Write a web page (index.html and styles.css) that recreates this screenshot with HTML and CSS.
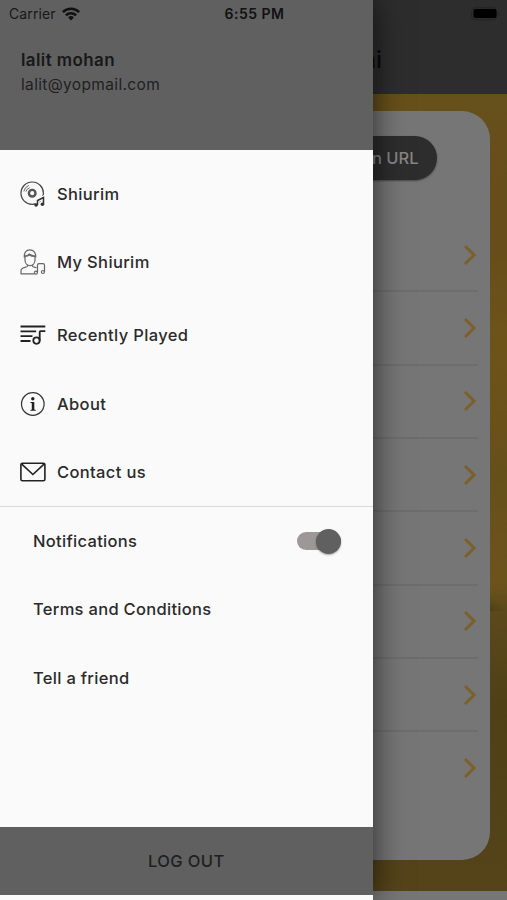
FILE: index.html
```html
<!DOCTYPE html>
<html lang="en">
<head>
<meta charset="utf-8">
<title>Shiurim</title>
<link rel="stylesheet" href="styles.css">
</head>
<body>
<div class="screen">
  <main class="app">
    <header class="app-bar"><h1 class="app-title">ni</h1></header>
    <div class="backdrop">
      <section class="card">
        <button class="pill">n URL</button>
        <ul class="list">
          <li class="row"><svg class="chevron" viewBox="0 0 14 22"><path d="M2 2l9 9-9 9"/></svg></li>
          <li class="row"><svg class="chevron" viewBox="0 0 14 22"><path d="M2 2l9 9-9 9"/></svg></li>
          <li class="row"><svg class="chevron" viewBox="0 0 14 22"><path d="M2 2l9 9-9 9"/></svg></li>
          <li class="row"><svg class="chevron" viewBox="0 0 14 22"><path d="M2 2l9 9-9 9"/></svg></li>
          <li class="row"><svg class="chevron" viewBox="0 0 14 22"><path d="M2 2l9 9-9 9"/></svg></li>
          <li class="row"><svg class="chevron" viewBox="0 0 14 22"><path d="M2 2l9 9-9 9"/></svg></li>
          <li class="row"><svg class="chevron" viewBox="0 0 14 22"><path d="M2 2l9 9-9 9"/></svg></li>
          <li class="row"><svg class="chevron" viewBox="0 0 14 22"><path d="M2 2l9 9-9 9"/></svg></li>
        </ul>
      </section>
    </div>
  </main>

  <aside class="drawer">
    <header class="profile">
      <strong class="name">lalit mohan</strong>
      <span class="email">lalit@yopmail.com</span>
    </header>
    <nav class="menu">
      <a class="item">
        <svg class="icon" viewBox="0 0 26 26"><g fill="none" stroke="#444"><circle cx="12.200" cy="12.200" r="11.200" stroke-width="1.200"/><circle cx="12.200" cy="12.200" r="3.300" stroke="#555" stroke-width="2.400"/><path d="M3.800 10.400a8.600 8.600 0 0 1 5-6M5.800 10.700a6.500 6.500 0 0 1 3.800-4" stroke="#666" stroke-width="1"/></g><path d="M17.500 24v-4.500l6-3V23" fill="none" stroke="#fafafa" stroke-width="4"/><path d="M17.500 24v-4.500l6-3V23" fill="none" stroke="#333" stroke-width="1.500"/><circle cx="16.100" cy="24" r="1.800" fill="#333"/><circle cx="22.400" cy="23.200" r="1.800" fill="#333"/></svg>
        <span>Shiurim</span>
      </a>
      <a class="item">
        <svg class="icon" viewBox="0 0 26 26"><g fill="none" stroke="#666" stroke-width="1.200" stroke-linejoin="round"><path d="M4.300 8.500C4 3.500 6 .8 9.800.8S16 3.500 15.700 8.500M4.300 7c2.500-.2 4-1 4.800-2 1.500 1.200 4 1.900 6.600 2M5 7.500v3.500c0 3.400 2.300 5.600 5 5.600s5-2.200 5-5.600V7.500"/><path d="M5 7.500c2-.1 3.600-.7 4.300-1.400 1.500 1 3.600 1.400 5.700 1.400M7.500 15.800v1.500c0 1.200-6.500.5-6.500 4.500v3h13.500M12.500 15.800v1.500c0 .7 2.500.8 4 1.600"/><path d="M17.500 23.500v-7.300c0-1 .5-1.500 1.500-1.500h4c1 0 1.500.5 1.500 1.500v6.800"/><circle cx="15.900" cy="23.700" r="1.500"/><circle cx="22.900" cy="23" r="1.500"/></g></svg>
        <span>My Shiurim</span>
      </a>
      <a class="item spaced">
        <svg class="icon" viewBox="0 0 26 26"><g fill="none" stroke="#222" stroke-width="1.800"><path d="M.5 4.500h24.800M.5 9.300h15.700M.5 14.200h12M.5 19h10M19.700 18.800V10q0-.9.900-.9h4.700"/><circle cx="16.500" cy="18.600" r="3.200"/></g></svg>
        <span>Recently Played</span>
      </a>
      <a class="item">
        <svg class="icon" viewBox="0 0 26 26"><circle cx="12.800" cy="13" r="11.300" fill="none" stroke="#333" stroke-width="1.200"/><circle cx="12.800" cy="7.800" r="1.700" fill="#222"/><path d="M10.400 10.900h3.900v7.500l1.500.5v.9h-5.400v-.9l1.400-.5v-6.100l-1.400-.5z" fill="#222"/></svg>
        <span>About</span>
      </a>
      <a class="item">
        <svg class="icon" viewBox="0 0 26 26"><g fill="none" stroke="#222" stroke-width="1.600"><rect x=".9" y="4.200" width="24" height="17.600" rx="1.500"/><path d="M1.500 4.800l11.400 10.700L24.300 4.800"/></g></svg>
        <span>Contact us</span>
      </a>
    </nav>
    <div class="options">
      <div class="option"><span>Notifications</span><span class="switch"><span class="knob"></span></span></div>
      <div class="option">Terms and Conditions</div>
      <div class="option">Tell a friend</div>
    </div>
    <button class="logout">LOG OUT</button>
  </aside>

  <div class="status">
    <span class="carrier">Carrier
      <svg class="wifi" viewBox="0 0 18 14"><g fill="none" stroke="#111" stroke-width="2.500"><path d="M.9 5.100a11.500 11.500 0 0 1 16.200 0M3.900 8.300a7.200 7.200 0 0 1 10.200 0"/></g><path d="M9 13.500l-2.900-3a4.100 4.100 0 0 1 5.800 0z" fill="#111"/></svg>
    </span>
    <span class="clock">6:55 PM</span>
    <svg class="battery" viewBox="0 0 29 14"><rect x=".6" y=".8" width="25" height="12" rx="3.500" fill="none" stroke="#242424"/><rect x="2.500" y="2" width="23" height="9" rx="2" fill="#000"/><path d="M27 5v4q1.300-.5 1.300-2T27 5z" fill="#242424"/></svg>
  </div>
</div>
</body>
</html>
```
FILE: styles.css
```css
* { box-sizing: border-box; }

body {
  margin: 0;
  font-family: Inter, "Liberation Sans", sans-serif;
  color: #2b2b2b;
}

button { border: 0; font-family: inherit; }

.screen {
  position: relative;
  width: 507px;
  height: 900px;
  overflow: hidden;
}

/* Dimmed page behind the drawer */
.app {
  display: flex;
  flex-direction: column;
  height: 100%;
  background: #767676;
}

.app-bar {
  height: 94px;
  padding: 45px 125px 0 0;
  background: #2d2d2d;
  text-align: right;
}

.app-title {
  margin: 0;
  font-size: 24px;
  line-height: 30px;
  font-weight: 500;
  color: #0b0b0b;
}

/* Gold cloth with one fold across the right edge */
.backdrop {
  height: 797px;
  padding: 17px 17px 32px 0;
  background:
    linear-gradient(37deg, rgba(60, 42, 10, .35), transparent 60%) right 0 top 504px / 17px 13px no-repeat,
    linear-gradient(to bottom, #66501b 0, #664d19 150px, #6e5319 250px, #66501a 380px, #6b531c 490px, #5b491a 517px, #57461a 550px, #4f4016 610px, #55441a 100%);
}

.card {
  display: flex;
  flex-direction: column;
  height: 748.500px;
  padding: 25px 12px 0 0;
  border-radius: 0 28px 28px 0;
  background: #767676;
}

.pill {
  align-self: flex-end;
  width: 180px;
  height: 44px;
  margin-right: 41.500px;
  padding: 0 18px 0 0;
  border-radius: 22px;
  background: #2d2d2d;
  box-shadow: 0 1px 2px rgba(0, 0, 0, .4);
  color: #858585;
  font-size: 16.500px;
  font-weight: 550;
  text-align: right;
}

.list {
  margin: 39.200px 0 0;
  padding: 0;
  list-style: none;
}

.row {
  display: flex;
  align-items: center;
  justify-content: flex-end;
  height: 73.300px;
  border-bottom: 2px solid #6d6d6d;
}

.row:last-child { height: 72px; border-bottom: 0; }

.chevron {
  width: 14px;
  height: 22px;
  margin-right: 1px;
  fill: none;
  stroke: #7c6029;
  stroke-width: 3;
}

/* Drawer */
.drawer {
  position: absolute;
  inset: 0 auto 0 0;
  display: flex;
  flex-direction: column;
  width: 372.500px;
  padding-bottom: 5px;
  background: #fafafa;
  box-shadow: 0 0 30px rgba(0, 0, 0, .65);
}

.profile {
  display: flex;
  flex-direction: column;
  height: 150px;
  padding: 48px 21px 0;
  background: #606060;
}

.name {
  font-size: 17px;
  line-height: 24px;
  font-weight: 600;
  letter-spacing: .4px;
  color: #181818;
}

.email {
  font-size: 15.500px;
  line-height: 26px;
  letter-spacing: .35px;
  color: #202020;
}

.menu {
  padding-top: 9.500px;
  border-bottom: 1px solid #dadada;
}

.item,
.option {
  display: flex;
  align-items: center;
  height: 68.300px;
  font-size: 16.500px;
  font-weight: 500;
  letter-spacing: .35px;
}

.item { gap: 11px; padding-left: 20px; }
.spaced { margin-top: 5px; }
.icon { width: 26px; height: 26px; }

.options { flex: 1; }

.option {
  justify-content: space-between;
  padding: 0 31.500px 0 33px;
  letter-spacing: .3px;
}

.switch {
  display: flex;
  align-items: center;
  justify-content: flex-end;
  width: 44.500px;
  height: 18px;
  border-radius: 9px;
  background: #9d9797;
}

.knob {
  width: 25px;
  height: 25px;
  border-radius: 50%;
  background: #606060;
  box-shadow: 0 1px 2px rgba(0, 0, 0, .35);
}

.logout {
  height: 68px;
  padding: 0 0 1px;
  background: #606060;
  color: #202020;
  font-size: 16.500px;
  font-weight: 500;
  letter-spacing: .4px;
}

/* System status bar, above everything */
.status {
  position: absolute;
  inset: 0 0 auto 0;
  display: grid;
  grid-template-columns: 1fr auto 1fr;
  align-items: center;
  height: 27px;
  padding: 0 7px 0 9px;
  color: #181818;
  font-size: 14px;
}

.carrier { display: flex; align-items: center; gap: 6px; letter-spacing: .1px; }
.wifi { width: 18px; height: 14px; }
.clock { color: #111; font-weight: 600; letter-spacing: .5px; }
.battery { width: 29px; height: 14px; justify-self: end; }
```
